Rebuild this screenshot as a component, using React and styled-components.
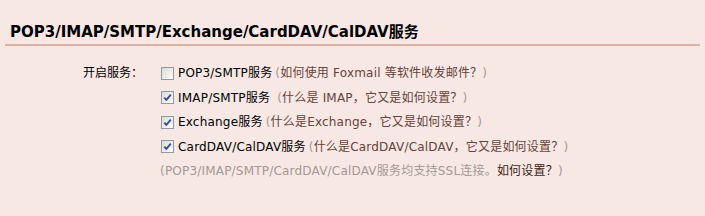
import React from 'react';
import styled, { createGlobalStyle } from 'styled-components';

const GlobalStyle = createGlobalStyle`
  html, body {
    margin: 0;
    padding: 0;
    background: #f7e8e4;
  }
  body {
    font-family: "DejaVu Sans", "Noto Sans CJK SC", sans-serif;
    font-size: 12px;
    color: #000;
  }
`;

const Panel = styled.div`
  width: 705px;
  height: 216px;
  padding: 0 5px;
  box-sizing: border-box;
`;

const Title = styled.h3`
  margin: 0;
  padding: 24px 0 4px 5px;
  font-size: 15px;
  font-weight: bold;
  line-height: 16px;
  border-bottom: 2px solid #dfb2a6;
`;

const Form = styled.div`
  display: grid;
  grid-template-columns: 150px 1fr;
  padding-top: 19px;
`;

const Label = styled.div`
  text-align: right;
  padding-right: 12px;
  line-height: 16px;
`;

const Options = styled.div`
  display: flex;
  flex-direction: column;
  gap: 8.5px;
`;

const Row = styled.label`
  display: flex;
  align-items: center;
  height: 16px;
  line-height: 16px;
  white-space: nowrap;
  letter-spacing: 0.2px;
  padding-left: ${p => (p.$muted ? 5 : 0)}px;
  color: ${p => (p.$muted ? '#a39894' : '#000')};
`;

const Box = styled.span`
  width: 11px;
  height: 11px;
  margin: 0 4px 0 6px;
  border: 1px solid #8f9aa6;
  background: linear-gradient(135deg, #dcdcd7, #fbfbf9);
  position: relative;
  flex: none;
  svg {
    position: absolute;
    left: 1px;
    top: 1px;
  }
`;

const Note = styled.span`
  color: #a39894;
  margin-left: ${p => p.$gap || 0}px;
`;

const Link = styled.span`
  color: ${p => (p.$dark ? '#3a1f14' : '#644338')};
`;

const Checkbox = ({ checked }) => (
  <Box>
    {checked && (
      <svg width="9" height="9" viewBox="0 0 9 9">
        <path d="M1.2 4.6 L3.4 6.9 L7.8 1.6" fill="none" stroke="#2c4f9e" strokeWidth="1.8" />
      </svg>
    )}
  </Box>
);

const App = () => (
  <Panel>
    <GlobalStyle />
    <Title>POP3/IMAP/SMTP/Exchange/CardDAV/CalDAV服务</Title>
    <Form>
      <Label>开启服务：</Label>
      <Options>
        <Row>
          <Checkbox />
          POP3/SMTP服务<Note $gap={3}>(</Note>
          <Link>如何使用 Foxmail 等软件收发邮件？</Link>
          <Note>)</Note>
        </Row>
        <Row>
          <Checkbox checked />
          IMAP/SMTP服务<Note $gap={7}>(</Note>
          <Link>什么是 IMAP，它又是如何设置？</Link>
          <Note>)</Note>
        </Row>
        <Row>
          <Checkbox checked />
          Exchange服务<Note $gap={3}>(</Note>
          <Link>什么是Exchange，它又是如何设置？</Link>
          <Note>)</Note>
        </Row>
        <Row>
          <Checkbox checked />
          CardDAV/CalDAV服务<Note $gap={3}>(</Note>
          <Link>什么是CardDAV/CalDAV，它又是如何设置？</Link>
          <Note>)</Note>
        </Row>
        <Row $muted>
          (POP3/IMAP/SMTP/CardDAV/CalDAV服务均支持SSL连接。
          <Link $dark>如何设置？</Link>
          <Note>)</Note>
        </Row>
      </Options>
    </Form>
  </Panel>
);

export default App;
